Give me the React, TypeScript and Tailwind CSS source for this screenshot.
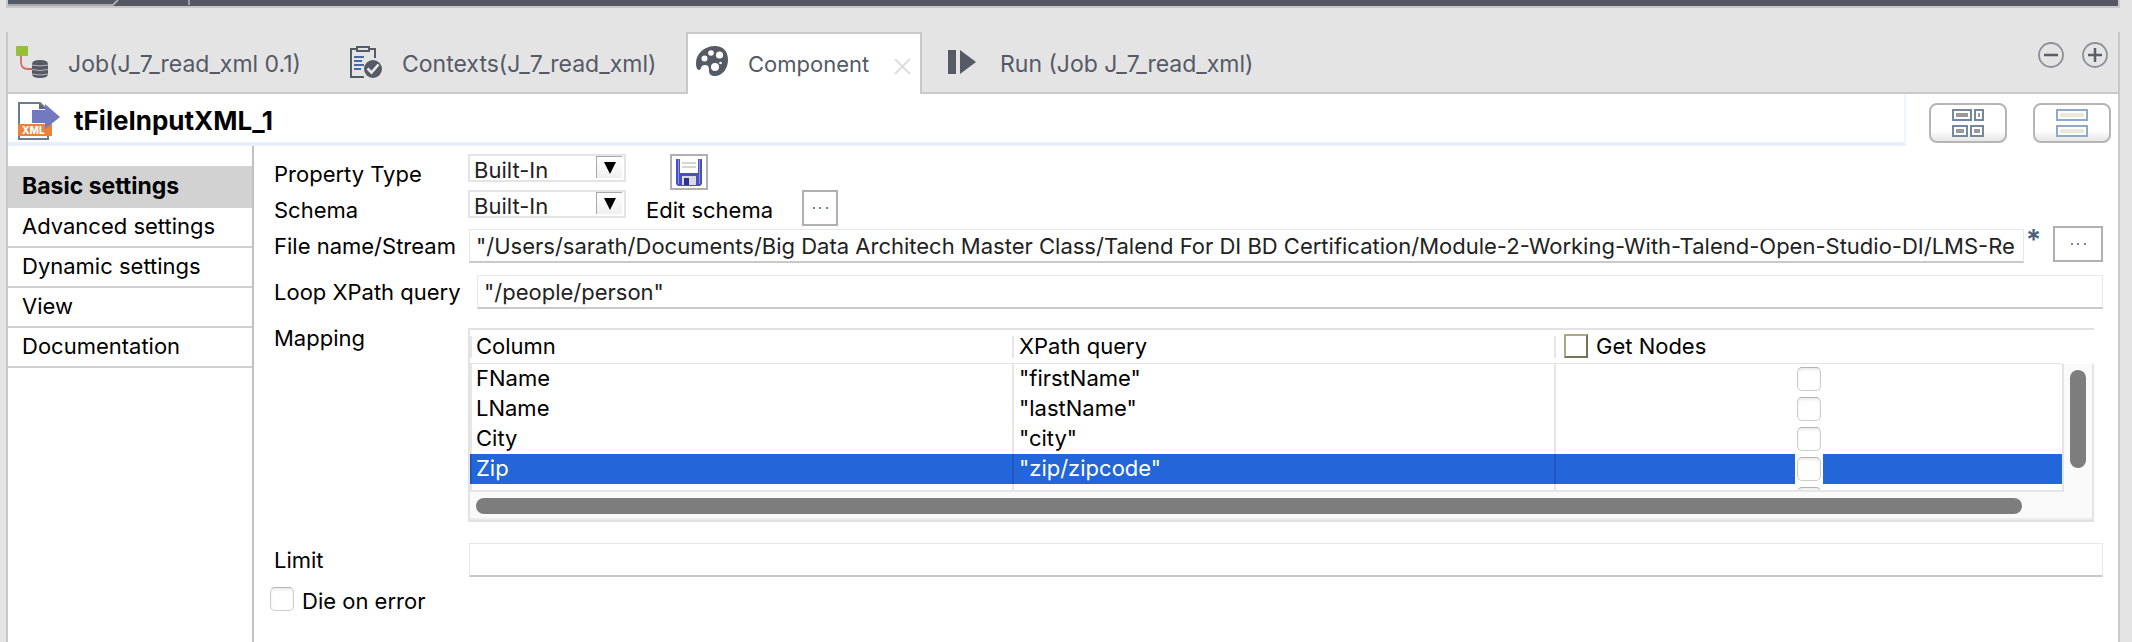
import React from "react";

const rows = [
  { column: "FName", query: '"firstName"' },
  { column: "LName", query: '"lastName"' },
  { column: "City", query: '"city"' },
  { column: "Zip", query: '"zip/zipcode"', selected: true },
  { column: "", query: "" },
];

const sections = ["Basic settings", "Advanced settings", "Dynamic settings", "View", "Documentation"];

function JobIcon() {
  return (
    <svg className="size-8" viewBox="0 0 32 32" aria-hidden="true">
      <path d="M5 10v6q0 7 7 7h5" fill="none" stroke="#d66a63" strokeWidth="1.8" />
      <rect width="12" height="10" rx="1" fill="#97bf35" />
      <path d="M16 18q0-4 8-4t8 4v10q0 4-8 4t-8-4z" fill="#565a64" />
      <path d="M16 19q8 2 16 0M16 23.500q8 2 16 0M16 28q8 2 16 0" fill="none" stroke="#b4b6bb" strokeWidth="1" />
    </svg>
  );
}

function ContextsIcon() {
  return (
    <svg className="size-8" viewBox="0 0 32 32" aria-hidden="true">
      <path d="M7 3H1v28h13M19 3h6v9" fill="none" stroke="#565a64" strokeWidth="2" />
      <rect x="7" y="1" width="12" height="4" fill="#e4e4e4" stroke="#565a64" strokeWidth="2" />
      <path d="M4 11h10M4 15h8M4 19h10M4 23h7" stroke="#3f6fa6" strokeWidth="2" />
      <circle cx="23" cy="23" r="9" fill="#565a64" />
      <path d="m17.500 22.500 4 4 7-8" fill="none" stroke="#e8e8e8" strokeWidth="2.600" />
    </svg>
  );
}

function PaletteIcon() {
  return (
    <svg className="size-8" viewBox="0 0 32 32" aria-hidden="true">
      <path d="M19 0C8 0 0 8 0 17c0 4 1 7 3 7 3 0 1-5 6-5 4 0 4 3 4 6 0 3 2 5 6 5 7 0 13-7 13-16C32 5 27 0 19 0z" fill="#565a64" />
      <circle cx="15" cy="7" r="2.800" fill="#fff" />
      <circle cx="23.500" cy="9" r="3.600" fill="#fff" />
      <circle cx="8.500" cy="12.500" r="3" fill="#fff" />
      <circle cx="24.500" cy="17" r="1.300" fill="#fff" />
      <circle cx="19" cy="21" r="4" fill="#fff" />
    </svg>
  );
}

function RunIcon() {
  return (
    <svg className="h-6 w-7" viewBox="0 0 28 24" aria-hidden="true">
      <path d="M0 0h8v24H0zM12 0l16 12-16 12z" fill="#565a64" />
    </svg>
  );
}

function XmlFileIcon() {
  return (
    <svg className="h-[38px] w-[42px]" viewBox="0 0 42 38" aria-hidden="true">
      <path d="M1 1h21l8 8v28H1z" fill="#fff" stroke="#6c7a92" strokeWidth="2" />
      <path d="M21 1v6h7z" fill="#566a80" />
      <rect y="22" width="34" height="12" fill="#ec8137" />
      <text x="4" y="32" fill="#fff" fontFamily="Inter, sans-serif" fontSize="10" fontWeight="800">XML</text>
      <path d="M14 8h13V2l15 13-15 12v-6H14z" fill="#7279bf" />
    </svg>
  );
}

function SaveIcon() {
  return (
    <svg className="h-7 w-[26px]" viewBox="0 0 26 28" aria-hidden="true">
      <path d="M0 1h26v25l-2 2H2l-2-2z" fill="#4a4fc0" />
      <path d="M2 1h1v25H2zM23 1h1v25h-1z" fill="#8f92e0" />
      <path d="M4 0h18v15H4z" fill="#fff" />
      <path d="M6 5h14M6 9h14" stroke="#c8c8c8" strokeWidth="1.500" />
      <path d="M6 18h14v9H6z" fill="#d9d9de" />
      <path d="M8 20h5v7H8z" fill="#2e3290" />
    </svg>
  );
}

function GridLayoutIcon() {
  return (
    <svg className="h-7 w-8" viewBox="0 0 32 28" aria-hidden="true">
      <g fill="#fff" stroke="#73879f" strokeWidth="2">
        <path d="M1 1h18v10H1zM23 1h8v10h-8zM1 17h14v10H1zM19 17h12v10H19z" />
      </g>
      <path d="M4 4h12v4H4zM26 4h2v4h-2zM4 20h8v4H4zM22 20h6v4h-6z" fill="#999" />
    </svg>
  );
}

function RowsLayoutIcon() {
  return (
    <svg className="h-7 w-8" viewBox="0 0 32 28" aria-hidden="true">
      <path d="M1 1h30v10H1zM1 17h30v10H1z" fill="#fff" stroke="#8fa9c6" strokeWidth="2" />
      <path d="M4 4h24v4H4zM4 20h24v4H4z" fill="#e8e8dc" />
    </svg>
  );
}

function Dots() {
  return (
    <svg className="h-[2px] w-[15px]" viewBox="0 0 15 2" aria-hidden="true">
      <path d="M0 0h2v2H0zM6 0h2v2H6zM13 0h2v2h-2z" fill="#6f83b5" />
    </svg>
  );
}

function Combo({ id }: { id: string }) {
  return (
    <div className="relative h-7 w-[158px] border-2 border-[#e4e4e4] bg-white">
      <select id={id} className="block h-full w-full appearance-none pt-[2px] pl-1 leading-6 text-[#222] outline-none">
        <option>Built-In</option>
      </select>
      <span className="pointer-events-none absolute top-0 right-[2px] flex h-[22px] w-[26px] items-start justify-center border-t border-l border-[#a8a8a8] bg-linear-to-b from-white to-[#f0f0f0] pt-[5px]">
        <svg className="h-3 w-3" viewBox="0 0 12 12" aria-hidden="true">
          <path d="M0 0h12L6 12z" fill="#000" />
        </svg>
      </span>
    </div>
  );
}

function Check({ id, label }: { id?: string; label?: string }) {
  return (
    <input
      id={id}
      type="checkbox"
      aria-label={label}
      className="block size-6 shrink-0 appearance-none rounded-[5px] border border-[#cdcdcd] border-t-[#b4b4b4] bg-white shadow-[inset_0_2px_3px_rgba(0,0,0,0.08)]"
    />
  );
}

const field =
  "h-[34px] min-w-0 flex-1 border border-[#e8e8e8] border-b-2 border-b-[#c9c9c9] bg-white px-[6px] text-[#222] outline-none";
const tab = "flex h-[60px] items-center text-[23px] text-[#565a66]";

export default function App() {
  return (
    <div className="flex min-h-screen flex-col bg-[#e4e4e4] pr-3 pl-[6px] font-['Inter',sans-serif] text-[22px] leading-7 text-black">
      <div className="flex h-2 border-x-2 border-b-2 border-[#c8c8c8] bg-[#555762]">
        <svg className="h-[6px] w-[184px]" viewBox="0 0 184 6" aria-hidden="true">
          <path d="M0 5h105l5-5" fill="none" stroke="#a9a9ad" strokeWidth="2" />
          <path d="M181 0v5" stroke="#9c9da4" strokeWidth="2" />
        </svg>
      </div>

      <div className="mt-6 flex flex-1 flex-col border-x-2 border-[#c8c8c8]">
        <div className="flex h-[62px] items-start border-b-2 border-[#c8c8c8]">
          <button className={`${tab} w-[334px] gap-5 pl-2`}>
            <JobIcon />
            <span className="pt-1">Job(J_7_read_xml 0.1)</span>
          </button>
          <button className={`${tab} w-[344px] gap-5 pl-2`}>
            <ContextsIcon />
            <span className="pt-1">Contexts(J_7_read_xml)</span>
          </button>
          <div className="flex h-[62px] w-[236px] items-start border-x-2 border-t-2 border-[#c8c8c8] bg-white pl-2 text-[#565a66]">
            <button className="flex h-14 items-center gap-5">
              <PaletteIcon />
              <span className="pt-1">Component</span>
            </button>
            <button aria-label="Close tab" className="mt-6 mr-[9px] ml-auto">
              <svg className="size-[17px]" viewBox="0 0 17 17" aria-hidden="true">
                <path d="m1 1 15 15M16 1 1 16" stroke="#dedede" strokeWidth="2" />
              </svg>
            </button>
          </div>
          <button className={`${tab} gap-6 pl-[26px]`}>
            <RunIcon />
            <span className="pt-1">Run (Job J_7_read_xml)</span>
          </button>
          <div className="mt-[10px] mr-[10px] ml-auto flex gap-[18px]">
            <button aria-label="Minimize">
              <svg className="size-[26px]" viewBox="0 0 26 26" aria-hidden="true">
                <circle cx="13" cy="13" r="12" fill="none" stroke="#8f9096" strokeWidth="1.800" />
                <path d="M6 13h14" stroke="#5b5d68" strokeWidth="2.500" />
              </svg>
            </button>
            <button aria-label="Maximize">
              <svg className="size-[26px]" viewBox="0 0 26 26" aria-hidden="true">
                <circle cx="13" cy="13" r="12" fill="none" stroke="#8f9096" strokeWidth="1.800" />
                <path d="M6 13h14M13 6v14" stroke="#5b5d68" strokeWidth="2.500" />
              </svg>
            </button>
          </div>
        </div>

        <header className="flex h-[52px] bg-white pr-[7px]">
          <div className="flex flex-1 items-center gap-[14px] border-r-2 border-b-4 border-[#e6effb] border-r-[#f1f6fd] pt-[6px] pl-[10px]">
            <XmlFileIcon />
            <h1 className="text-[26px] font-bold">tFileInputXML_1</h1>
          </div>
          <div className="ml-[23px] flex gap-[26px] pt-[9px]">
            <button aria-label="Compact view" className="flex h-10 w-[78px] items-center justify-center rounded-lg border-2 border-[#b5b5b5] bg-linear-to-b from-white from-70% to-[#e6e6e6]">
              <GridLayoutIcon />
            </button>
            <button aria-label="Table view" className="flex h-10 w-[78px] items-center justify-center rounded-lg border-2 border-[#b5b5b5] bg-linear-to-b from-white from-70% to-[#e6e6e6]">
              <RowsLayoutIcon />
            </button>
          </div>
        </header>

        <main className="flex flex-1 bg-white">
          <nav className="w-[246px] shrink-0 border-r-2 border-[#c0c0c0] pt-5">
            {sections.map((name, i) => (
              <a
                key={name}
                href="#"
                className={
                  i === 0
                    ? "block h-[42px] bg-[#d2d2d2] pt-[6px] pl-[14px] text-[23px] font-bold"
                    : "block h-10 border-b-2 border-[#d0d0d0] pt-1 pl-[14px]"
                }
              >
                {name}
              </a>
            ))}
          </nav>

          <form className="min-w-0 flex-1 pt-2 pr-[15px] pl-5">
            <div className="flex h-9 items-start">
              <label htmlFor="property" className="w-[194px] shrink-0 pt-[6px]">Property Type</label>
              <Combo id="property" />
              <button type="button" aria-label="Save" className="ml-[44px] flex h-9 w-[38px] items-center justify-center border-2 border-[#b0b0b0] bg-white">
                <SaveIcon />
              </button>
            </div>
            <div className="flex h-9 items-start">
              <label htmlFor="schema" className="w-[194px] shrink-0 pt-[6px]">Schema</label>
              <Combo id="schema" />
              <span className="w-[176px] pt-[6px] pl-5">Edit schema</span>
              <button type="button" aria-label="Edit schema" className="flex size-9 items-center justify-center border-2 border-[#b0b0b0] bg-white">
                <Dots />
              </button>
            </div>
            <div className="flex h-[37px] items-start">
              <label htmlFor="file" className="w-[195px] shrink-0 pt-[6px]">File name/Stream</label>
              <input
                id="file"
                className={`${field} mt-[3px]`}
                defaultValue={'"/Users/sarath/Documents/Big Data Architech Master Class/Talend For DI BD Certification/Module-2-Working-With-Talend-Open-Studio-DI/LMS-Re'}
              />
              <span className="w-[29px] pl-[2px] text-[28px] font-semibold text-[#4a6080]">*</span>
              <button type="button" aria-label="Browse" className="flex h-9 w-[50px] items-center justify-center border-2 border-[#b0b0b0] bg-white">
                <Dots />
              </button>
            </div>
            <div className="mt-3 flex items-center">
              <label htmlFor="loop" className="w-[203px] shrink-0">Loop XPath query</label>
              <input id="loop" className={field} defaultValue={'"/people/person"'} />
            </div>

            <div className="mt-[15px] flex items-start">
              <span className="w-[194px] shrink-0">Mapping</span>
              <div className="mt-1 mr-[9px] min-w-0 flex-1 border-t-2 border-b-2 border-l-2 border-[#e2e2e2]">
                <div className="flex h-[162px]">
                  <div className="min-w-0 flex-1 overflow-hidden border-b-2 border-[#e6e6e6]">
                    <table className="w-full table-fixed border-separate border-spacing-0 text-left">
                      <colgroup>
                        <col className="w-[542px]" />
                        <col className="w-[542px]" />
                        <col />
                      </colgroup>
                      <thead>
                        <tr className="h-[34px]">
                          <th className="border-b border-[#e2e2e2] p-0 font-normal">
                            <div className="flex h-[22px] items-center border-l-2 border-[#e6e6e6] pb-[2px] pl-1">Column</div>
                          </th>
                          <th className="border-b border-[#e2e2e2] p-0 font-normal">
                            <div className="flex h-[22px] items-center border-l-2 border-[#e6e6e6] pb-[2px] pl-[5px]">XPath query</div>
                          </th>
                          <th className="border-b border-[#e2e2e2] p-0 font-normal">
                            <div className="flex h-[22px] items-center border-l-2 border-[#e6e6e6] pb-[2px] pl-2">
                              <label className="flex items-center gap-2">
                                <input type="checkbox" className="size-6 appearance-none border-2 border-[#aaa78a] border-r-[#73745a] border-b-[#73745a] bg-white" />
                                Get Nodes
                              </label>
                            </div>
                          </th>
                        </tr>
                      </thead>
                      <tbody>
                        {rows.map((row, i) => {
                          const cell = row.selected ? "border-l-2 border-[#1f57be]" : "border-l-2 border-[#e6e6e6]";
                          return (
                            <tr key={i} className={row.selected ? "h-[30px] bg-[#2266da] text-white" : "h-[30px]"}>
                              <td className={`${cell} pt-0 pr-0 pb-[2px] pl-1`}>{row.column}</td>
                              <td className={`${cell} pt-0 pr-0 pb-[2px] pl-[5px]`}>{row.query}</td>
                              <td className={`${cell} p-0`}>
                                <div className="mx-auto flex h-[30px] w-7 items-center justify-center bg-white">
                                  <Check label={`Get nodes ${row.column}`} />
                                </div>
                              </td>
                            </tr>
                          );
                        })}
                      </tbody>
                    </table>
                  </div>
                  <div className="w-8 shrink-0 pt-[34px]">
                    <div className="h-32 border-r-2 border-l-2 border-[#e4e4e4] bg-[#fafafa] pt-[6px] pl-[6px]">
                      <div className="h-[98px] w-4 rounded-full bg-[#7d7d7d]" />
                    </div>
                  </div>
                </div>
                <div className="h-7 border-r-2 border-b-2 border-[#e4e4e4] border-b-[#ececec] bg-[#fafafa] pt-[6px] pr-[70px] pl-[6px]">
                  <div className="h-4 rounded-full bg-[#7d7d7d]" />
                </div>
              </div>
            </div>

            <div className="mt-[21px] flex items-center">
              <label htmlFor="limit" className="w-[195px] shrink-0">Limit</label>
              <input id="limit" className={field} />
            </div>
            <div className="mt-[10px] -ml-1 flex items-start gap-2">
              <Check id="die" />
              <label htmlFor="die">Die on error</label>
            </div>
          </form>
        </main>
      </div>
    </div>
  );
}
